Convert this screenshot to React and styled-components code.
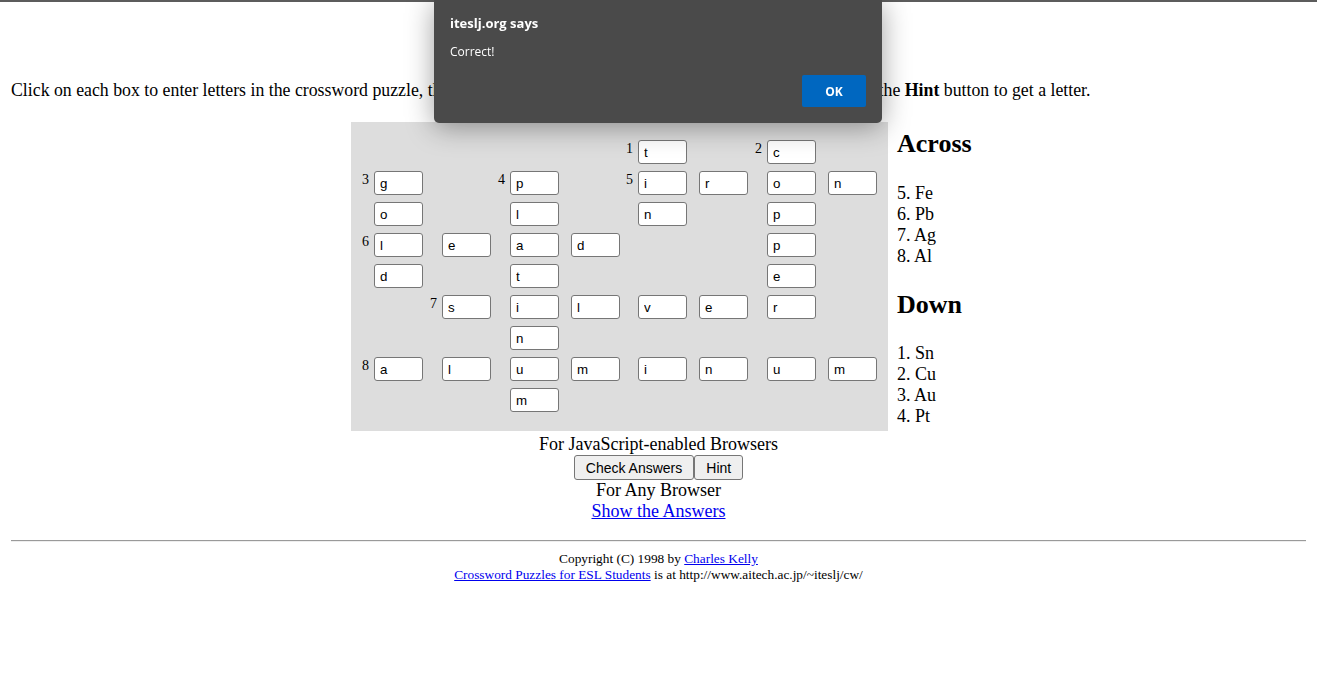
import React from "react";
import styled, { createGlobalStyle } from "styled-components";

const GlobalStyle = createGlobalStyle`
  html, body { margin: 0; padding: 0; background: #fff; }
  body {
    border-top: 2px solid #5c5c5c;
    font-family: "Liberation Serif", "Times New Roman", serif;
    font-size: 16px;
    color: #000;
  }
`;

const Page = styled.div`
  padding: 0 11px 40px 11px;
`;

const Title = styled.h2`
  margin: 0;
  padding-top: 20px;
  height: 58px;
  text-align: center;
  font-size: 24px;
  line-height: 28px;
`;

const Intro = styled.p`
  margin: 0 0 22px 0;
  font-size: 17.8px;
  line-height: 20px;
  white-space: nowrap;
`;

const PuzzleRow = styled.div`
  display: flex;
  justify-content: center;
  align-items: flex-start;
`;

const Board = styled.div`
  display: grid;
  grid-template-columns: 62px 62px 62px 55px 61px 55px 62px 55px;
  grid-auto-rows: 24px;
  column-gap: 6px;
  row-gap: 7px;
  padding: 18px 11px 19px 10px;
  background: #dddddd;
`;

const Cell = styled.div`
  display: flex;
  justify-content: flex-end;
  align-items: flex-start;
`;

const Num = styled.span`
  flex: 1;
  margin-right: 5px;
  margin-top: 2px;
  text-align: right;
  font-size: 14px;
  line-height: 14px;
  font-family: "Liberation Serif", "Times New Roman", serif;
`;

const Box = styled.input`
  box-sizing: border-box;
  width: 49px;
  height: 24px;
  margin: 0;
  padding: 0 5px;
  border: 1px solid #767676;
  border-radius: 3px;
  background: #fff;
  font-family: "Liberation Sans", Arial, sans-serif;
  font-size: 13.33px;
  color: #000;
  outline: none;
`;

const Clues = styled.div`
  width: 69px;
  padding-left: 9px;
  white-space: nowrap;
`;

const ClueHeading = styled.h2`
  margin: ${(p) => (p.$first ? "7px" : "23px")} 0 0 0;
  font-size: 26px;
  line-height: 30px;
  font-weight: bold;
`;

const ClueList = styled.div`
  margin-top: ${(p) => (p.$last ? "23px" : "24px")};
  font-size: 18px;
  line-height: 21px;
`;

const Bottom = styled.div`
  margin-top: 3px;
  text-align: center;
  font-size: 18px;
  line-height: 21px;
`;

const ButtonRow = styled.div`
  display: flex;
  justify-content: center;
  align-items: center;
  height: 25px;
`;

const FormButton = styled.button`
  box-sizing: border-box;
  height: 25px;
  margin: 0;
  padding: 0 11px;
  border: 1px solid #767676;
  border-radius: 3px;
  background: #efefef;
  font-family: "Liberation Sans", Arial, sans-serif;
  font-size: 14px;
  color: #000;
`;

const Link = styled.a`
  color: #0000ee;
  text-decoration: underline;
`;

const Rule = styled.hr`
  margin: 18px 0 9px 0;
  border: 0;
  border-top: 1px solid #9a9a9a;
  border-bottom: 1px solid #eeeeee;
  height: 0;
`;

const Footer = styled.div`
  text-align: center;
  font-size: 13.33px;
  line-height: 16px;
`;

const Dialog = styled.div`
  position: fixed;
  top: 0;
  left: calc(50% - 224.5px);
  width: 448px;
  box-sizing: border-box;
  padding: 14px 16px 16px 16px;
  background: #4a4a4a;
  border-radius: 0 0 5px 5px;
  box-shadow: 0 4px 28px rgba(0, 0, 0, 0.38);
  color: #fff;
  font-family: "Open Sans", "Noto Sans", sans-serif;
  z-index: 10;
`;

const DialogTitle = styled.div`
  font-size: 13px;
  font-weight: bold;
  line-height: 18px;
`;

const DialogMessage = styled.div`
  margin-top: 12px;
  font-size: 12px;
  line-height: 16px;
`;

const DialogActions = styled.div`
  display: flex;
  justify-content: flex-end;
  margin-top: 15px;
`;

const OkButton = styled.button`
  width: 64px;
  height: 32px;
  border: 0;
  border-radius: 2px;
  background: #0067c0;
  color: #fff;
  font-family: "Open Sans", "Noto Sans", sans-serif;
  font-size: 12px;
  font-weight: bold;
`;

const cells = {
  "0-4": ["t", 1], "0-6": ["c", 2],
  "1-0": ["g", 3], "1-2": ["p", 4], "1-4": ["i", 5], "1-5": ["r"], "1-6": ["o"], "1-7": ["n"],
  "2-0": ["o"], "2-2": ["l"], "2-4": ["n"], "2-6": ["p"],
  "3-0": ["l", 6], "3-1": ["e"], "3-2": ["a"], "3-3": ["d"], "3-6": ["p"],
  "4-0": ["d"], "4-2": ["t"], "4-6": ["e"],
  "5-1": ["s", 7], "5-2": ["i"], "5-3": ["l"], "5-4": ["v"], "5-5": ["e"], "5-6": ["r"],
  "6-2": ["n"],
  "7-0": ["a", 8], "7-1": ["l"], "7-2": ["u"], "7-3": ["m"], "7-4": ["i"], "7-5": ["n"], "7-6": ["u"], "7-7": ["m"],
  "8-2": ["m"],
};

export default function App() {
  const grid = [];
  for (let r = 0; r < 9; r++) {
    for (let c = 0; c < 8; c++) {
      const d = cells[`${r}-${c}`];
      grid.push(
        <Cell key={`${r}-${c}`}>
          {d && d[1] ? <Num>{d[1]}</Num> : null}
          {d ? <Box defaultValue={d[0]} /> : null}
        </Cell>
      );
    }
  }
  return (
    <>
      <GlobalStyle />
      <Page>
        <Title>Elements Crossword</Title>
        <Intro>
          Click on each box to enter letters in the crossword puzzle, then click on the <b>Check</b> button to check your answers, or click the <b>Hint</b> button to get a letter.
        </Intro>
        <PuzzleRow>
          <Board>{grid}</Board>
          <Clues>
            <ClueHeading $first>Across</ClueHeading>
            <ClueList>
              <div>5. Fe</div>
              <div>6. Pb</div>
              <div>7. Ag</div>
              <div>8. Al</div>
            </ClueList>
            <ClueHeading>Down</ClueHeading>
            <ClueList $last>
              <div>1. Sn</div>
              <div>2. Cu</div>
              <div>3. Au</div>
              <div>4. Pt</div>
            </ClueList>
          </Clues>
        </PuzzleRow>
        <Bottom>
          <div>For JavaScript-enabled Browsers</div>
          <ButtonRow>
            <FormButton>Check Answers</FormButton>
            <FormButton>Hint</FormButton>
          </ButtonRow>
          <div>For Any Browser</div>
          <div>
            <Link href="#">Show the Answers</Link>
          </div>
        </Bottom>
        <Rule />
        <Footer>
          <div>
            Copyright (C) 1998 by <Link href="#">Charles Kelly</Link>
          </div>
          <div>
            <Link href="#">Crossword Puzzles for ESL Students</Link> is at http://www.aitech.ac.jp/~iteslj/cw/
          </div>
        </Footer>
      </Page>
      <Dialog>
        <DialogTitle>iteslj.org says</DialogTitle>
        <DialogMessage>Correct!</DialogMessage>
        <DialogActions>
          <OkButton>OK</OkButton>
        </DialogActions>
      </Dialog>
    </>
  );
}
